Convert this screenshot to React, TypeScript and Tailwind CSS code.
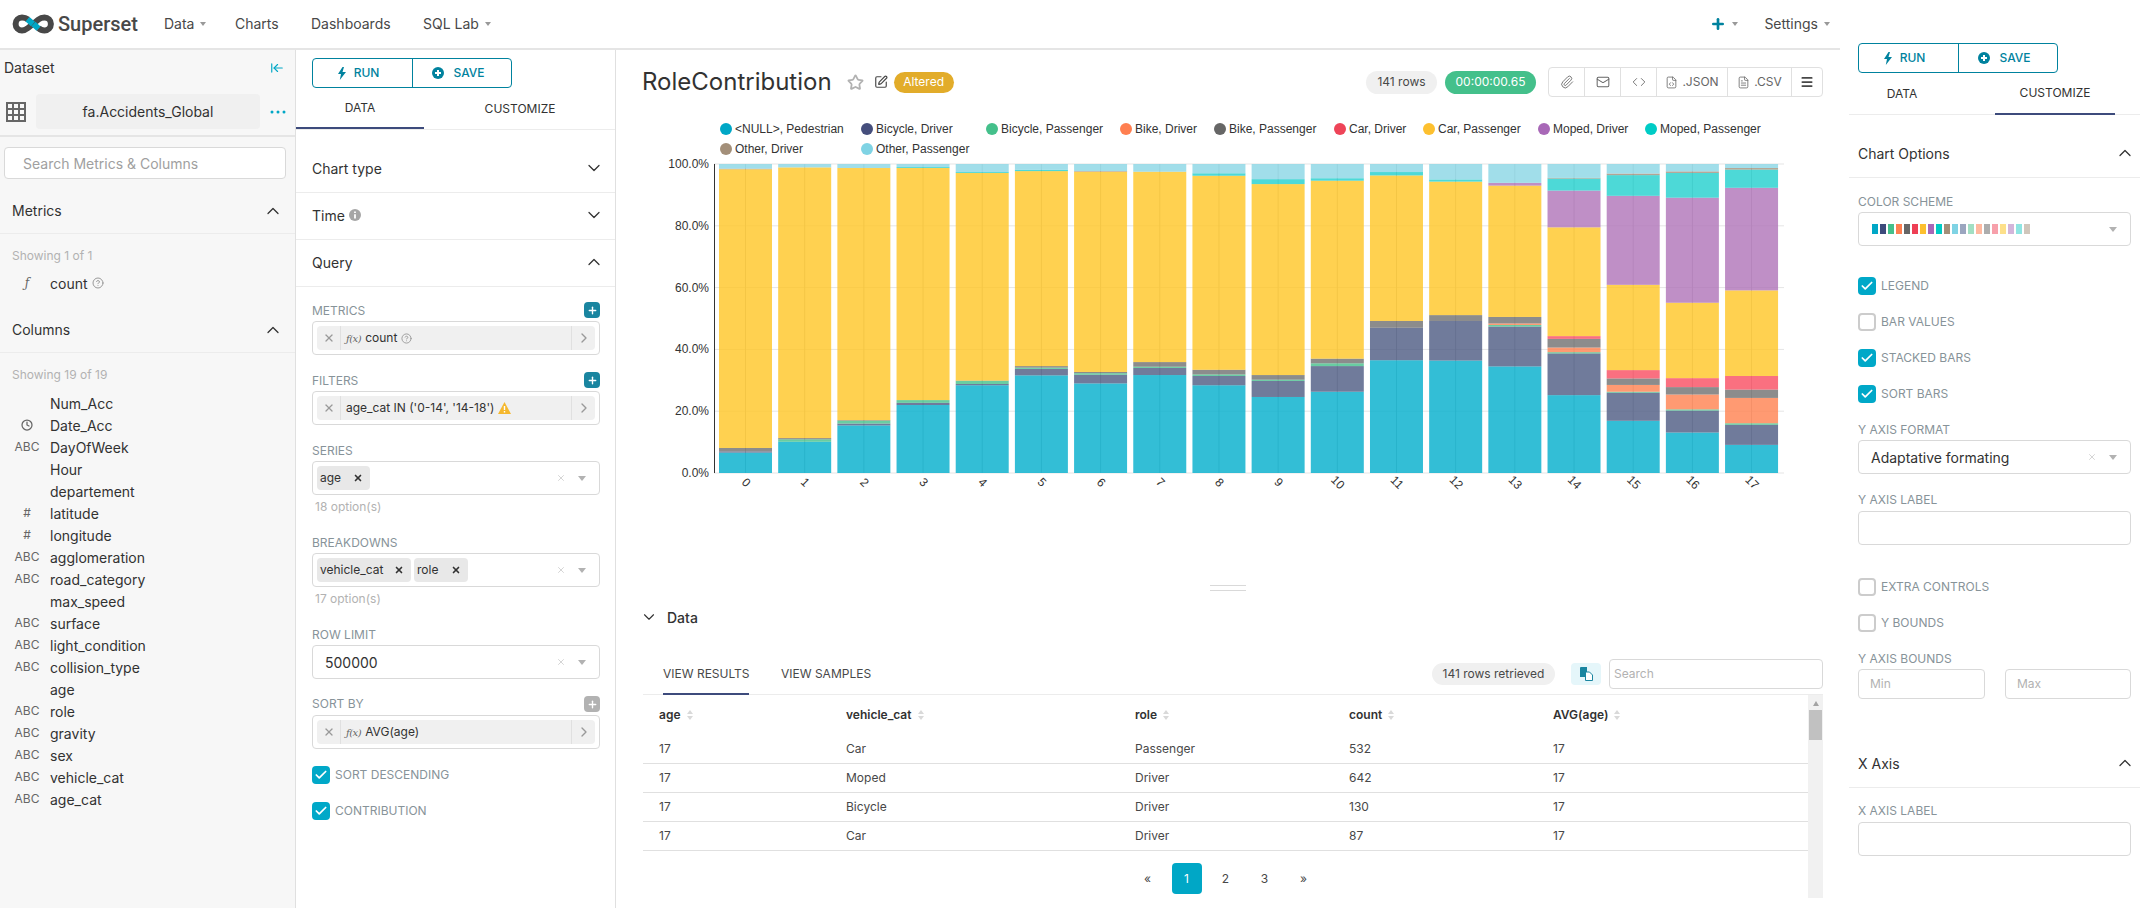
import { ReactNode } from 'react';
import {
  Check,
  ChevronDown,
  ChevronRight,
  ChevronUp,
  CircleHelp,
  Clock,
  Code,
  FileCode,
  FileText,
  Mail,
  Menu,
  Paperclip,
  Plus,
  SquarePen,
  Star,
  X,
  ArrowLeftToLine,
} from 'lucide-react';

const COLORS = ['#00a7c6', '#454e7c', '#44c08b', '#ff7f50', '#666666', '#ee4458', '#fdc02f', '#a868b7', '#00ccc6', '#a38f79', '#7fd3e4'];

// bars are drawn at 80% opacity, these land on the tints of the picture
const BAR_COLORS = ['#00aecc', '#4c5a82', '#44c08b', '#ff814f', '#6f6f6f', '#f94c60', '#ffc524', '#af73b8', '#20d0cd', '#a38f79', '#89d6e5'];

const SWATCHES = [
  '#00a7c6', '#3d4b7c', '#44c08b', '#ff7f50', '#666666', '#ee3f55', '#fdc02f', '#a868b7', '#00ccc6', '#a38f79',
  '#7fd3e4', '#9ba6bf', '#a2dfc3', '#ffb9a0', '#adadad', '#f7a0ab', '#fde08a', '#d3b5da', '#8fe5e2', '#d0c6bb',
];

const LEGEND: [number, number, number, string][] = [
  [0, 726, 129, '<NULL>, Pedestrian'],
  [1, 867, 129, 'Bicycle, Driver'],
  [2, 992, 129, 'Bicycle, Passenger'],
  [3, 1126, 129, 'Bike, Driver'],
  [4, 1220, 129, 'Bike, Passenger'],
  [5, 1340, 129, 'Car, Driver'],
  [6, 1429, 129, 'Car, Passenger'],
  [7, 1544, 129, 'Moped, Driver'],
  [8, 1651, 129, 'Moped, Passenger'],
  [9, 726, 149, 'Other, Driver'],
  [10, 867, 149, 'Other, Passenger'],
];

// [color index, top of the segment in %], from the bottom of the stack up
const BARS: [number, number][][] = [
  [[0, 6.6], [1, 7], [4, 8.1], [6, 98.3], [9, 98.5], [10, 100]],
  [[0, 10.1], [2, 10.9], [4, 11.3], [6, 98.9], [10, 100]],
  [[0, 15.4], [1, 16], [2, 16.9], [4, 17.1], [6, 98.7], [10, 100]],
  [[0, 22], [1, 22.7], [2, 23.6], [6, 98.7], [8, 99], [10, 100]],
  [[0, 28.4], [1, 28.8], [2, 29.8], [4, 29.9], [6, 97.1], [8, 97.4], [10, 100]],
  [[0, 31.6], [1, 33.7], [2, 34.1], [4, 34.6], [6, 97.7], [8, 98.1], [10, 100]],
  [[0, 29], [1, 31.8], [2, 32.3], [4, 32.7], [6, 97.5], [9, 97.7], [10, 100]],
  [[0, 31.7], [1, 34], [2, 34.4], [4, 35.9], [6, 97.5], [10, 100]],
  [[0, 28.4], [1, 31.4], [2, 31.9], [4, 33.4], [6, 96.2], [8, 97], [10, 100]],
  [[0, 24.6], [1, 29.8], [2, 30.2], [4, 31.7], [6, 93.5], [8, 95.1], [10, 100]],
  [[0, 26.3], [1, 34.6], [2, 35.5], [4, 37], [6, 94.6], [8, 95.4], [10, 100]],
  [[0, 36.5], [1, 47], [4, 49.2], [6, 96.3], [8, 97.4], [10, 100]],
  [[0, 36.4], [1, 49.2], [4, 51.1], [6, 94.3], [8, 95], [10, 100]],
  [[0, 34.5], [1, 47.4], [2, 47.9], [3, 48.4], [4, 50.5], [6, 93], [7, 93.9], [10, 100]],
  [[0, 25.2], [1, 38.7], [2, 39.1], [3, 40.6], [4, 43.4], [5, 44.3], [6, 79.5], [7, 91.4], [8, 95.3], [9, 95.5], [10, 100]],
  [[0, 16.9], [1, 26], [2, 26.3], [3, 28.5], [4, 30.6], [5, 33.3], [6, 60.9], [7, 89.7], [8, 96.4], [9, 96.9], [10, 100]],
  [[0, 13.1], [1, 20.2], [2, 20.6], [3, 25.4], [4, 27.8], [5, 30.7], [6, 55.1], [7, 89.1], [8, 97.1], [9, 97.6], [10, 100]],
  [[0, 9.1], [1, 15.6], [2, 16.1], [3, 24.3], [4, 27], [5, 31.4], [6, 59.1], [7, 92.3], [8, 98.2], [9, 98.7], [10, 100]],
];

const COLUMNS: [string, string][] = [
  ['', 'Num_Acc'],
  ['clock', 'Date_Acc'],
  ['ABC', 'DayOfWeek'],
  ['', 'Hour'],
  ['', 'departement'],
  ['#', 'latitude'],
  ['#', 'longitude'],
  ['ABC', 'agglomeration'],
  ['ABC', 'road_category'],
  ['', 'max_speed'],
  ['ABC', 'surface'],
  ['ABC', 'light_condition'],
  ['ABC', 'collision_type'],
  ['', 'age'],
  ['ABC', 'role'],
  ['ABC', 'gravity'],
  ['ABC', 'sex'],
  ['ABC', 'vehicle_cat'],
  ['ABC', 'age_cat'],
];

const ROWS = [
  ['17', 'Car', 'Passenger', '532', '17'],
  ['17', 'Moped', 'Driver', '642', '17'],
  ['17', 'Bicycle', 'Driver', '130', '17'],
  ['17', 'Car', 'Driver', '87', '17'],
];

function Logo() {
  return (
    <svg width="43" height="18" viewBox="0 0 43 18" fill="none" strokeWidth="6" className="overflow-visible">
      <path
        d="M16 4.5C14 3 12 2.6 10 2.6a6.4 6.4 0 0 0 0 12.8c2.400 0 4.300-1 6-2.400l10.500-8.500c1.700-1.400 3.600-1.900 6-1.900a6.400 6.400 0 0 1 0 12.800c-2.400 0-4.200-.7-6-2.400"
        stroke="#484848"
      />
      <path d="M15.500 4.200l5.500 4.800M21.500 9l5 4.600" stroke="#00a7c6" />
    </svg>
  );
}

function Caret() {
  return <span className="ml-[6px] h-0 w-0 border-x-[3.5px] border-t-[4px] border-x-transparent border-t-[#999]" />;
}

function Navbar() {
  return (
    <nav className="flex h-[50px] items-center border-b-2 border-[#e5e5e5] pb-[1px] text-[14px] text-[#484848]">
      <div className="ml-[12px] flex w-[152px] items-center gap-[3px]">
        <Logo />
        <span className="font-['Roboto',sans-serif] text-[20px] font-medium leading-none">Superset</span>
      </div>
      <span className="flex w-[71px] items-center">Data<Caret /></span>
      <span className="w-[76px]">Charts</span>
      <span className="w-[112px]">Dashboards</span>
      <span className="flex items-center">SQL Lab<Caret /></span>
      <span className="ml-auto flex items-center">
        <Plus size={16} strokeWidth={4} className="text-[#00829e]" />
        <Caret />
      </span>
      <span className="ml-[26px] mr-[10px] flex items-center">Settings<Caret /></span>
    </nav>
  );
}

function SectionHeader({ title, className }: { title: string; className: string }) {
  return (
    <div className={`flex h-[46px] items-center justify-between border-b border-[#ececec] pl-[12px] pr-[12px] text-[14px] text-[#323232] ${className}`}>
      {title}
      <ChevronUp size={20} strokeWidth={1.5} />
    </div>
  );
}

function DatasetPanel() {
  return (
    <aside className="w-[296px] shrink-0 border-r border-[#e0e0e0] bg-[#f7f7f7] text-[14px] text-[#323232]">
      <div className="mt-[8px] flex h-[20px] items-center justify-between pb-[1px] pl-[4px] pr-[11px]">
        Dataset
        <ArrowLeftToLine size={14} className="-scale-x-100 rotate-180 text-[#00a7c6]" />
      </div>
      <div className="mt-[16px] flex h-[43px] items-start border-b-2 border-[#e5e5e5] pl-[6px]">
        <svg width="20" height="20" viewBox="0 0 20 20" className="mt-[8px]" fill="#666">
          <path d="M0 0h20v20H0zM2 2v4h4V2zM8 2v4h4V2zM14 2v4h4V2zM2 8v4h4V8zM8 8v4h4V8zM14 8v4h4V8zM2 14v4h4v-4zM8 14v4h4v-4zM14 14v4h4v-4z" fillRule="evenodd" />
        </svg>
        <div className="ml-[10px] flex h-[35px] w-[224px] items-center justify-center rounded bg-[#f0f0f0]">fa.Accidents_Global</div>
        <svg width="16" height="4" viewBox="0 0 16 4" fill="#00a7c6" className="ml-[10px] mt-[16px]">
          <circle cx="2" cy="2" r="1.500" />
          <circle cx="8" cy="2" r="1.500" />
          <circle cx="14" cy="2" r="1.500" />
        </svg>
      </div>
      <div className="ml-[4px] mt-[10px] flex h-[32px] w-[282px] items-center rounded border border-[#d9d9d9] bg-white pl-[18px] text-[#a0a0a0]">
        Search Metrics &amp; Columns
      </div>
      <SectionHeader title="Metrics" className="mt-[9px]" />
      <div className="ml-[12px] mt-[14px] h-[16px] text-[12px] leading-[16px] text-[#b2b2b2]">Showing 1 of 1</div>
      <div className="mt-[8px] flex h-[22px] items-center">
        <span className="ml-[10px] mr-[6px] w-[34px] text-center font-['DejaVu_Serif',serif] text-[12px] italic text-[#666]">ƒ</span>
        count
        <CircleHelp size={12} className="ml-[4px] text-[#999]" />
      </div>
      <SectionHeader title="Columns" className="mt-[13px]" />
      <div className="ml-[12px] mt-[14px] h-[16px] text-[12px] leading-[16px] text-[#b2b2b2]">Showing 19 of 19</div>
      <div className="mt-[9px]">
        {COLUMNS.map(([type, name]) => (
          <div key={name} className="flex h-[22px] items-center">
            <span className="ml-[10px] mr-[6px] flex w-[34px] justify-center text-[12px] text-[#666]">
              {type === 'clock' ? <Clock size={12} strokeWidth={2.5} /> : type}
            </span>
            {name}
          </div>
        ))}
      </div>
    </aside>
  );
}

function Bolt() {
  return (
    <svg width="8" height="13" viewBox="0 0 8 13" fill="currentColor">
      <path d="M4.500 0L0 7h3L1.800 13 8 5H4.500l1.500-5z" />
    </svg>
  );
}

function RunSave({ className }: { className: string }) {
  return (
    <div className={`flex h-[30px] w-[200px] rounded border border-[#00829e] text-[12px] font-medium text-[#00829e] ${className}`}>
      <div className="flex flex-1 items-center justify-center gap-[8px] border-r border-[#00829e] pr-[8px]">
        <Bolt />
        RUN
      </div>
      <div className="flex flex-1 items-center justify-center gap-[9px] pr-[7px]">
        <svg width="12" height="12" viewBox="0 0 12 12">
          <circle cx="6" cy="6" r="6" fill="currentColor" />
          <path d="M6 3v6M3 6h6" stroke="#fff" strokeWidth="2" />
        </svg>
        SAVE
      </div>
    </div>
  );
}

function AccordionRow({ title, open, icon, className = '' }: { title: string; open?: boolean; icon?: ReactNode; className?: string }) {
  return (
    <div className={`flex h-[47px] items-center justify-between border-b border-[#ececec] pb-[2px] text-[14px] text-[#323232] ${className}`}>
      <span className="flex items-center gap-[4px]">{title}{icon}</span>
      {open ? <ChevronUp size={20} strokeWidth={1.5} /> : <ChevronDown size={20} strokeWidth={1.5} />}
    </div>
  );
}

function Label({ text, add, className = '' }: { text: string; add?: 'active' | 'muted'; className?: string }) {
  return (
    <div className={`flex h-[16px] items-center justify-between text-[12px] uppercase text-[#879399] ${className}`}>
      <span className={add === 'active' ? 'pt-[2px]' : ''}>{text}</span>
      {add && (
        <span className={`flex h-[16px] w-[16px] items-center justify-center rounded-sm text-white ${add === 'active' ? 'bg-[#1a85a0]' : 'bg-[#b2b2b2]'}`}>
          <Plus size={11} strokeWidth={3} />
        </span>
      )}
    </div>
  );
}

function Box({ children, className = '' }: { children?: ReactNode; className?: string }) {
  return <div className={`flex h-[34px] items-center rounded border border-[#d9d9d9] bg-white ${className}`}>{children}</div>;
}

function MetricBox({ children, className = '' }: { children: ReactNode; className?: string }) {
  return (
    <Box className={`px-[4px] ${className}`}>
      <div className="flex h-[24px] w-full items-center rounded-sm bg-[#f0f0f0] text-[12px] text-[#323232]">
        <span className="flex h-full w-[24px] items-center justify-center border-r border-[#e0e0e0] text-[#999]">
          <X size={12} strokeWidth={2.5} />
        </span>
        <span className="flex flex-1 items-center gap-[4px] pl-[5px]">{children}</span>
        <span className="flex h-full w-[24px] items-center justify-center border-l border-[#e0e0e0] text-[#999]">
          <ChevronRight size={16} strokeWidth={2} />
        </span>
      </div>
    </Box>
  );
}

function Fx() {
  return <span className="font-['DejaVu_Serif',serif] text-[10px] italic tracking-[-0.5px] text-[#666]">ƒ(x)</span>;
}

function SelectEnd({ clear = true }: { clear?: boolean }) {
  return (
    <span className="ml-auto flex items-center pr-[13px]">
      {clear && <X size={10} className="mr-[12px] text-[#ccc]" />}
      <span className="h-0 w-0 border-x-[4px] border-t-[5px] border-x-transparent border-t-[#b2b2b2]" />
    </span>
  );
}

function Tag({ text, width }: { text: string; width: string }) {
  return (
    <span className={`mr-[3px] flex h-[24px] items-center justify-between rounded-sm bg-[#e8e8e8] pl-[3px] pr-[7px] text-[12px] text-[#323232] ${width}`}>
      {text}
      <X size={10} strokeWidth={4} />
    </span>
  );
}

function CheckRow({ text, on, className = '' }: { text: string; on?: boolean; className?: string }) {
  return (
    <div className={`flex h-[18px] items-center gap-[5px] text-[12px] text-[#879399] ${className}`}>
      {on ? (
        <span className="flex h-[18px] w-[18px] items-center justify-center rounded-sm bg-[#00a8c8] text-white">
          <Check size={14} strokeWidth={3} />
        </span>
      ) : (
        <span className="h-[18px] w-[18px] rounded-sm border-2 border-[#ccc] bg-white" />
      )}
      {text}
    </div>
  );
}

function InfoDot() {
  return (
    <svg width="12" height="12" viewBox="0 0 12 12">
      <circle cx="6" cy="6" r="6" fill="#a6a6a6" />
      <path d="M6 2.500v1.500M6 5.200V9.500" stroke="#fff" strokeWidth="1.800" />
    </svg>
  );
}

function Warning() {
  return (
    <svg width="13" height="12" viewBox="0 0 13 12">
      <path d="M6.500 0L13 12H0z" fill="#f5b82e" />
      <path d="M6.500 4v4M6.500 9v1.500" stroke="#fff" strokeWidth="1.400" />
    </svg>
  );
}

function ControlPanel() {
  return (
    <section className="w-[320px] shrink-0 border-r border-[#e0e0e0]">
      <RunSave className="ml-[16px] mt-[8px]" />
      <div className="flex h-[42px] border-b border-[#ececec] text-[12px] text-[#323232]">
        <div className="flex w-[128px] items-center justify-center border-b-2 border-[#3d4b7c]">DATA</div>
        <div className="ml-[32px] flex w-[128px] items-center justify-center">CUSTOMIZE</div>
      </div>
      <div className="mt-[16px]">
        <AccordionRow title="Chart type" className="pl-[16px] pr-[11px]" />
        <AccordionRow title="Time" icon={<InfoDot />} className="pl-[16px] pr-[11px]" />
        <AccordionRow title="Query" open className="pl-[16px] pr-[11px]" />
      </div>
      <div className="px-[16px] pr-[15px]">
        <Label text="Metrics" add="active" className="mt-[15px] mb-[3px]" />
        <MetricBox>
          <Fx />
          count
          <CircleHelp size={11} className="text-[#999]" />
        </MetricBox>
        <Label text="Filters" add="active" className="mt-[17px] mb-[3px]" />
        <MetricBox>
          age_cat IN ('0-14', '14-18')
          <Warning />
        </MetricBox>
        <Label text="Series" className="mt-[18px] mb-[2px]" />
        <Box className="pl-[4px]">
          <Tag text="age" width="w-[53px]" />
          <SelectEnd />
        </Box>
        <div className="h-[24px] pl-[3px] text-[12px] leading-[24px] text-[#b2b2b2]">18 option(s)</div>
        <Label text="Breakdowns" className="mt-[16px] mb-[2px]" />
        <Box className="pl-[4px]">
          <Tag text="vehicle_cat" width="w-[94px]" />
          <Tag text="role" width="w-[54px]" />
          <SelectEnd />
        </Box>
        <div className="h-[24px] pl-[3px] text-[12px] leading-[24px] text-[#b2b2b2]">17 option(s)</div>
        <Label text="Row limit" className="mt-[16px] mb-[2px]" />
        <Box className="pl-[12px] text-[14px] text-[#323232]">
          500000
          <SelectEnd />
        </Box>
        <Label text="Sort by" add="muted" className="mt-[17px] mb-[3px]" />
        <MetricBox>
          <Fx />
          AVG(age)
        </MetricBox>
        <CheckRow text="SORT DESCENDING" on className="mt-[17px]" />
        <CheckRow text="CONTRIBUTION" on className="mt-[18px]" />
      </div>
    </section>
  );
}

function Chart() {
  const plotTop = 164;
  const plotHeight = 309;
  const y = (pct: number) => plotTop + plotHeight * (1 - pct / 100);
  return (
    <svg width="1224" height="468" viewBox="616 114 1224 468" className="block font-['Liberation_Sans',sans-serif] text-[12px]">
      {LEGEND.map(([c, cx, cy, text]) => (
        <g key={text}>
          <circle cx={cx} cy={cy} r="6" fill={COLORS[c]} />
          <text x={cx + 9} y={cy + 4} fill="#333">{text}</text>
        </g>
      ))}
      {[0, 20, 40, 60, 80, 100].map((t) => (
        <g key={t}>
          <line x1="714" x2="1784" y1={y(t)} y2={y(t)} stroke="#e5e5e5" />
          <text x="709" y={y(t) + 4} textAnchor="end" fill="#333">{t}.0%</text>
        </g>
      ))}
      {BARS.map((bar, i) => {
        const x = 719 + i * 59.18;
        let base = 0;
        return (
          <g key={i}>
            <line x1={x + 26.5} x2={x + 26.5} y1={plotTop} y2={plotTop + plotHeight} stroke="#c8c8c8" />
            {bar.map(([c, top]) => {
              const rect = <rect key={c} x={x} width="53" y={y(top)} height={y(base) - y(top)} fill={BAR_COLORS[c]} fillOpacity="0.8" />;
              base = top;
              return rect;
            })}
            <text x={x + 26.5} y="483" textAnchor="middle" fill="#333" transform={`rotate(45 ${x + 26.5} 483)`} dominantBaseline="middle">{i}</text>
          </g>
        );
      })}
      <line x1="714.500" x2="714.500" y1={plotTop} y2={plotTop + plotHeight} stroke="#333" />
    </svg>
  );
}

function ChartHeader() {
  const group = 'flex h-full items-center justify-center border-r border-[#e0e0e0]';
  return (
    <header className="flex h-[64px] items-center pl-[26px] pr-[17px] text-[#484848]">
      <h1 className="text-[24px] font-normal leading-none text-[#323232]">RoleContribution</h1>
      <Star size={17} strokeWidth={2.5} className="ml-[15px] text-[#b2b2b2]" />
      <SquarePen size={14} strokeWidth={2} className="ml-[10px]" />
      <span className="ml-[6px] flex h-[21px] w-[60px] items-center justify-center rounded-full bg-[#e2ac2a] text-[12px] text-white">Altered</span>
      <span className="ml-auto flex h-[23px] w-[71px] items-center justify-center rounded-full bg-[#f0f0f0] text-[12px]">141 rows</span>
      <span className="ml-[8px] flex h-[23px] w-[91px] items-center justify-center rounded-full bg-[#44c08b] text-[12px] text-white">00:00:00.65</span>
      <div className="ml-[12px] flex h-[30px] w-[275px] rounded border border-[#e0e0e0] text-[12px] text-[#666]">
        <span className={`w-[36px] ${group}`}><Paperclip size={14} strokeWidth={1.5} /></span>
        <span className={`w-[36px] ${group}`}><Mail size={14} strokeWidth={1.75} /></span>
        <span className={`w-[36px] ${group}`}><Code size={14} strokeWidth={1.5} /></span>
        <span className={`w-[71px] gap-[4px] ${group}`}><FileCode size={13} strokeWidth={1.5} />.JSON</span>
        <span className={`w-[64px] gap-[4px] ${group}`}><FileText size={13} strokeWidth={1.5} />.CSV</span>
        <span className="flex flex-1 items-center justify-center text-[#484848]"><Menu size={14} strokeWidth={3} /></span>
      </div>
    </header>
  );
}

function SortArrows() {
  return (
    <svg width="6" height="10" viewBox="0 0 6 10" fill="#d9d9d9" className="ml-[6px]">
      <path d="M3 0l3 4H0zM3 10L0 6h6z" />
    </svg>
  );
}

function DataTable() {
  const grid = 'grid grid-cols-[187px_289px_214px_204px_271px]';
  return (
    <div className="ml-[27px] mr-[17px] flex h-[203px] text-[12px] text-[#484848]">
      <div className="w-[1165px]">
        <div className={`${grid} h-[40px] items-center font-semibold text-[#323232]`}>
          {['age', 'vehicle_cat', 'role', 'count', 'AVG(age)'].map((h) => (
            <span key={h} className="flex items-center pl-[16px]">{h}<SortArrows /></span>
          ))}
        </div>
        {ROWS.map((row, i) => (
          <div key={i} className={`${grid} h-[29px] items-center border-b border-[#e0e0e0]`}>
            {row.map((cell, j) => (
              <span key={j} className="pl-[16px]">{cell}</span>
            ))}
          </div>
        ))}
        <div className="mt-[12px] flex justify-center">
          {['«', '1', '2', '3', '»'].map((p) => (
            <span key={p} className="flex h-[31px] w-[39px] items-center justify-center">
              {p === '1' ? (
                <span className="flex h-[31px] w-[30px] items-center justify-center rounded bg-[#00a7c6] text-white">1</span>
              ) : (
                p
              )}
            </span>
          ))}
        </div>
      </div>
      <div className="flex w-[15px] flex-col items-center bg-[#f1f1f1]">
        <span className="mt-[6px] h-0 w-0 border-x-[3.500px] border-b-[5px] border-x-transparent border-b-[#a3a3a3]" />
        <span className="mt-[4px] h-[30px] w-[13px] bg-[#c1c1c1]" />
      </div>
    </div>
  );
}

function MainColumn() {
  return (
    <main className="min-w-0 flex-1">
      <ChartHeader />
      <Chart />
      <div className="flex h-[10px] flex-col items-center gap-[4px] pt-[3px]">
        <span className="h-px w-[36px] bg-[#d9d9d9]" />
        <span className="h-px w-[36px] bg-[#d9d9d9]" />
      </div>
      <div className="ml-[24px] mt-[13px] flex h-[24px] items-center gap-[9px] text-[14px] font-medium text-[#323232]">
        <ChevronDown size={18} strokeWidth={1.5} />
        Data
      </div>
      <div className="ml-[27px] mr-[17px] mt-[30px] flex h-[36px] items-start whitespace-nowrap border-b border-[#ececec] text-[12px] text-[#484848]">
        <span className="ml-[20px] h-[36px] w-[86px] border-b-2 border-[#3d4b7c] text-center leading-[30px]">VIEW RESULTS</span>
        <span className="ml-[32px] leading-[30px]">VIEW SAMPLES</span>
        <span className="ml-auto mt-[4px] flex h-[22px] w-[123px] items-center justify-center rounded-full bg-[#f0f0f0]">141 rows retrieved</span>
        <span className="ml-[16px] mt-[4px] flex h-[22px] w-[30px] items-center justify-center rounded bg-[#e5f6fa]">
          <svg width="13" height="14" viewBox="0 0 13 14">
            <path d="M0 1a1 1 0 0 1 1-1h6v10H0z" fill="#1a85a0" />
            <path d="M5.500 5h4l3 3v5.500h-7z" fill="#fff" stroke="#1a85a0" />
          </svg>
        </span>
        <span className="ml-[8px] flex h-[30px] w-[214px] items-center rounded border border-[#d9d9d9] pl-[4px] text-[#b2b2b2]">Search</span>
      </div>
      <DataTable />
    </main>
  );
}

function CustomizePanel() {
  return (
    <aside className="ml-[9px] w-[291px] shrink-0">
      <RunSave className="ml-[9px] mt-[43px]" />
      <div className="flex h-[42px] border-b border-[#ececec] text-[12px] text-[#323232]">
        <div className="flex w-[106px] items-center justify-center">DATA</div>
        <div className="ml-[40px] flex h-[42px] w-[120px] items-center justify-center border-b-2 border-[#3d4b7c]">CUSTOMIZE</div>
      </div>
      <AccordionRow title="Chart Options" open className="mt-[16px] pl-[9px] pr-[5px]" />
      <div className="pl-[9px] pr-[9px]">
        <Label text="Color scheme" className="mt-[16px] mb-[2px]" />
        <Box className="pl-[13px]">
          <span className="flex gap-[2px]">
            {SWATCHES.map((c) => (
              <span key={c} className="h-[10px] w-[6px]" style={{ backgroundColor: c }} />
            ))}
          </span>
          <SelectEnd clear={false} />
        </Box>
        <CheckRow text="LEGEND" on className="mt-[31px]" />
        <CheckRow text="BAR VALUES" className="mt-[18px]" />
        <CheckRow text="STACKED BARS" on className="mt-[18px]" />
        <CheckRow text="SORT BARS" on className="mt-[18px]" />
        <Label text="Y axis format" className="mt-[19px] mb-[2px]" />
        <Box className="h-[33px] pl-[12px] text-[14px] text-[#323232]">
          Adaptative formating
          <SelectEnd />
        </Box>
        <Label text="Y axis label" className="mt-[18px] mb-[3px]" />
        <Box />
        <CheckRow text="EXTRA CONTROLS" className="mt-[33px]" />
        <CheckRow text="Y BOUNDS" className="mt-[18px]" />
        <Label text="Y axis bounds" className="mt-[19px] mb-[2px]" />
        <div className="flex gap-[20px] text-[12px] text-[#b2b2b2]">
          <div className="flex h-[30px] w-[127px] items-center rounded border border-[#d9d9d9] pl-[11px]">Min</div>
          <div className="flex h-[30px] w-[126px] items-center rounded border border-[#d9d9d9] pl-[11px]">Max</div>
        </div>
      </div>
      <AccordionRow title="X Axis" open className="mt-[42px] pl-[9px] pr-[5px]" />
      <div className="pl-[9px] pr-[9px]">
        <Label text="X axis label" className="mt-[15px] mb-[3px]" />
        <Box />
      </div>
    </aside>
  );
}

export default function App() {
  return (
    <div className="flex h-[908px] w-[2150px] overflow-hidden bg-white font-['Inter',sans-serif]">
      <div className="flex w-[1840px] shrink-0 flex-col">
        <Navbar />
        <div className="flex min-h-0 flex-1">
          <DatasetPanel />
          <ControlPanel />
          <MainColumn />
        </div>
      </div>
      <CustomizePanel />
    </div>
  );
}
